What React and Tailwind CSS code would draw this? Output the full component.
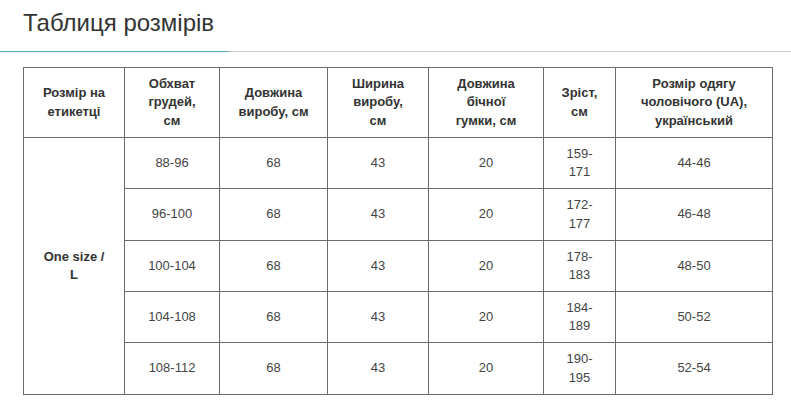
import React from "react";

const headers = [
  ["Розмір на", "етикетці"],
  ["Обхват", "грудей,", "см"],
  ["Довжина", "виробу, см"],
  ["Ширина", "виробу,", "см"],
  ["Довжина", "бічної", "гумки, см"],
  ["Зріст,", "см"],
  ["Розмір одягу", "чоловічого (UA),", "український"],
];

const widths = [101, 95, 108, 101, 115, 72, 157];

const rows = [
  ["88-96", "68", "43", "20", ["159-", "171"], "44-46"],
  ["96-100", "68", "43", "20", ["172-", "177"], "46-48"],
  ["100-104", "68", "43", "20", ["178-", "183"], "48-50"],
  ["104-108", "68", "43", "20", ["184-", "189"], "50-52"],
  ["108-112", "68", "43", "20", ["190-", "195"], "52-54"],
];

const rowHeights = [51, 52, 51, 51, 52];

const Lines = ({ lines }) =>
  lines.map((l, i) => (
    <React.Fragment key={i}>
      {i > 0 && <br />}
      {l}
    </React.Fragment>
  ));

export default function App() {
  return (
    <div
      className="w-[791px] h-[406px] bg-white overflow-hidden text-[#333]"
      style={{ fontFamily: '"Liberation Sans", Arial, sans-serif' }}
    >
      {/* Title */}
      <div className="pl-[23px] pt-[8px] h-[51px]">
        <h2 className="text-[24px] leading-[30px] font-normal text-[#333]">
          Таблиця розмірів
        </h2>
      </div>
      <div className="flex h-px">
        <div className="w-[229px] bg-[#5aa9bd]"></div>
        <div className="flex-1 bg-[#cccccc]"></div>
      </div>

      {/* Size table */}
      <div className="pl-[23px] pt-[15px]">
        <table className="table-fixed border-collapse w-[750px] text-[13px] leading-[18.5px] text-center">
          <colgroup>
            {widths.map((w, i) => (
              <col key={i} style={{ width: w }} />
            ))}
          </colgroup>
          <thead>
            <tr className="h-[70px]">
              {headers.map((h, i) => (
                <th
                  key={i}
                  className="border border-[#6b6b6b] font-bold align-middle px-1 text-[#333]"
                >
                  <Lines lines={h} />
                </th>
              ))}
            </tr>
          </thead>
          <tbody>
            {rows.map((r, ri) => (
              <tr key={ri} style={{ height: rowHeights[ri] }}>
                {ri === 0 && (
                  <td
                    rowSpan={5}
                    className="border border-[#6b6b6b] font-bold align-middle px-1"
                  >
                    One size /<br />L
                  </td>
                )}
                {r.map((c, ci) => (
                  <td
                    key={ci}
                    className="border border-[#6b6b6b] align-middle px-1 text-[#444]"
                  >
                    {Array.isArray(c) ? <Lines lines={c} /> : c}
                  </td>
                ))}
              </tr>
            ))}
          </tbody>
        </table>
      </div>
    </div>
  );
}
